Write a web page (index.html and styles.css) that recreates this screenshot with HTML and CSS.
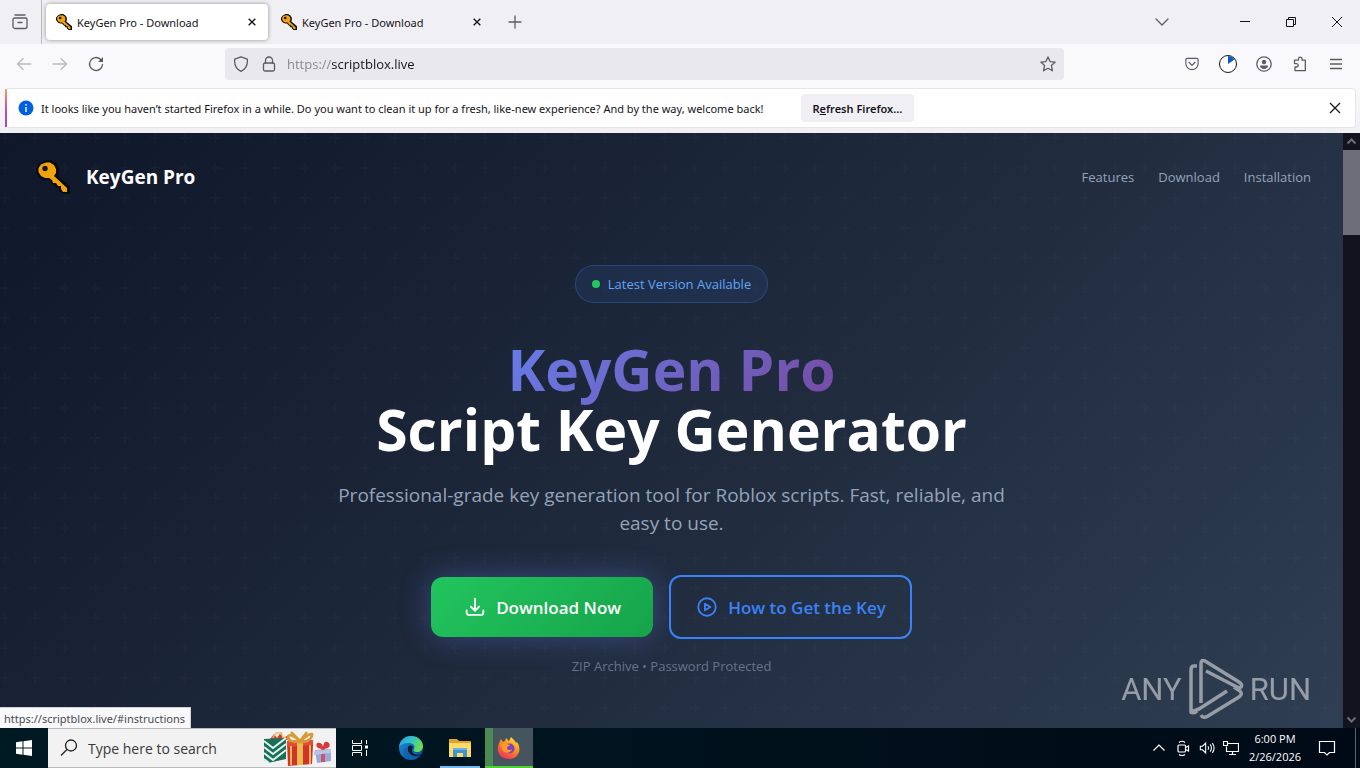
FILE: index.html
```
<!DOCTYPE html>
<html lang="en">
<head>
  <meta charset="UTF-8">
  <meta name="viewport" content="width=device-width, initial-scale=1.0">
  <title>KeyGen Pro - Download</title>
  <link rel="stylesheet" href="styles.css">
</head>
<body>
  <svg class="defs" aria-hidden="true">
    <symbol id="key" viewBox="0 0 34 34">
      <path d="M10 0h5l5 3 3 5v5l-1 3 12 10v8h-7l-4-3v-3h-3l-2-3-3-2-2-3H9l-5-2-4-5V8l4-5z" fill="#0a0a0c"/>
      <path d="M10 2.500h4l4 2.500 2 4v4l-2 3 13 12v4h-4l-2-3v-3h-3l-2-3h-3l-1-3-3-2H9l-4-2-2.500-4V8L5 4.500z" fill="#f0a30a"/>
      <circle cx="9" cy="8.500" r="2.700" fill="#15141a"/>
    </symbol>
    <symbol id="close" viewBox="0 0 12 12">
      <path d="M1 1l10 10M11 1L1 11"/>
    </symbol>
  </svg>

  <!-- tabs -->
  <div class="tabstrip">
    <button class="recent" aria-label="Recent browsing">
      <svg class="icon" viewBox="0 0 16 16"><path d="M3 1h10M2.500 4h11A1.500 1.500 0 0 1 15 5.500v7a2 2 0 0 1-2 2H3a2 2 0 0 1-2-2v-7A1.500 1.500 0 0 1 2.500 4zM6 8.500h4"/></svg>
    </button>
    <div class="tab active">
      <svg class="favicon"><use href="#key"/></svg>
      <span class="tab-title">KeyGen Pro - Download</span>
      <button class="tab-close" aria-label="Close tab"><svg><use href="#close"/></svg></button>
    </div>
    <div class="tab">
      <svg class="favicon"><use href="#key"/></svg>
      <span class="tab-title">KeyGen Pro - Download</span>
      <button class="tab-close" aria-label="Close tab"><svg><use href="#close"/></svg></button>
    </div>
    <button class="new-tab" aria-label="New tab"><svg class="icon" viewBox="0 0 16 16"><path d="M8 2v12M2 8h12"/></svg></button>
    <div class="window-controls">
      <button class="list-tabs" aria-label="List all tabs"><svg class="icon" viewBox="0 0 16 16"><path d="M2 5l6 6 6-6"/></svg></button>
      <button class="win" aria-label="Minimize"><svg viewBox="0 0 10 10"><path d="M0 4.500h10"/></svg></button>
      <button class="win" aria-label="Restore"><svg viewBox="0 0 10 10"><path d="M.5 2.500h7v7h-7zM2.500 2.500v-2h7v7h-2"/></svg></button>
      <button class="win" aria-label="Close"><svg viewBox="0 0 10 10"><path d="M0 0l10 10M10 0L0 10"/></svg></button>
    </div>
  </div>

  <!-- address bar -->
  <div class="toolbar">
    <button class="tool off" aria-label="Back"><svg class="icon" viewBox="0 0 16 16"><path d="M15 8H1.500M7 2.500L1.500 8 7 13.500"/></svg></button>
    <button class="tool off" aria-label="Forward"><svg class="icon" viewBox="0 0 16 16"><path d="M1 8h13.500M9 2.500L14.500 8 9 13.500"/></svg></button>
    <button class="tool" aria-label="Reload"><svg class="icon" viewBox="0 0 16 16"><path d="M14.500 8.500A6.500 6.500 0 1 1 12.500 3.300l1.500 1.500"/><path class="solid" d="M15 1v5h-5z"/></svg></button>
    <div class="urlbar">
      <svg class="icon" viewBox="0 0 16 16"><path d="M8 .8l6.300 2.400c.6 6-1.800 10-6.300 12.200C3.500 13.200 1.100 9.200 1.700 3.200z"/></svg>
      <svg class="icon lock" viewBox="0 0 16 16"><rect x="2.500" y="7" width="11" height="8" rx="1.500"/><path d="M4.500 7V4.500a3.500 3.500 0 0 1 7 0V7"/></svg>
      <input class="url" type="text" aria-label="Address" value="https://scriptblox.live">
      <button class="tool star" aria-label="Bookmark"><svg class="icon" viewBox="0 0 16 16"><path d="M8 .9l2.100 4.700 5.100.5-3.800 3.500 1.100 5.200L8 12.200l-4.500 2.600 1.100-5.200L.8 6.100l5.100-.5z"/></svg></button>
    </div>
    <button class="tool" aria-label="Pocket"><svg class="icon small" viewBox="0 0 16 16"><path d="M2.500 1.500h11A1.500 1.500 0 0 1 15 3v4.500a7 7 0 0 1-14 0V3a1.500 1.500 0 0 1 1.500-1.500zM4.500 6L8 9.500 11.500 6"/></svg></button>
    <button class="tool" aria-label="Session"><svg class="dial" viewBox="0 0 20 20"><circle cx="10" cy="10" r="8.500" fill="#fff" stroke="#15141a"/><path d="M10 2v8l6.500-4.500A8 8 0 0 0 10 2z" fill="#0a5cc0"/></svg></button>
    <button class="tool" aria-label="Account"><svg class="icon" viewBox="0 0 16 16"><circle cx="8" cy="8" r="7.200"/><circle class="solid" cx="8" cy="6" r="2.200"/><path class="solid" d="M4 9.500h8c0 2-1.500 3.500-4 3.500s-4-1.500-4-3.500z"/></svg></button>
    <button class="tool" aria-label="Extensions"><svg class="icon" viewBox="0 0 16 16"><path d="M2.500 5.500V4.200h4V3a1.800 1.800 0 0 1 3.600 0v1.200h3.200v10.500H3V11h1.500a1.700 1.700 0 0 0 0-3.400H2.500z"/></svg></button>
    <button class="tool" aria-label="Menu"><svg class="icon" viewBox="0 0 16 16"><path d="M2.500 3.500h11M2.500 8h11M2.500 12.500h11"/></svg></button>
  </div>

  <!-- notification -->
  <div class="notice-wrap">
    <div class="notice">
      <svg class="info" viewBox="0 0 16 16"><circle cx="8" cy="8" r="7.500" fill="#0060df"/><path d="M8 7v5M8 4v1.500" stroke="#fff" stroke-width="1.400"/></svg>
      <span class="notice-text">It looks like you haven’t started Firefox in a while. Do you want to clean it up for a fresh, like-new experience? And by the way, welcome back!</span>
      <button class="refresh">R<u>e</u>fresh Firefox…</button>
      <button class="notice-close" aria-label="Dismiss"><svg><use href="#close"/></svg></button>
    </div>
  </div>

  <!-- page -->
  <div class="viewport">
    <main class="hero">
      <nav class="navbar">
        <a class="brand" href="#"><svg class="logo"><use href="#key"/></svg>KeyGen Pro</a>
        <div class="links">
          <a href="#features">Features</a>
          <a href="#download">Download</a>
          <a href="#instructions">Installation</a>
        </div>
      </nav>
      <section class="content">
        <div class="badge"><span class="dot"></span>Latest Version Available</div>
        <h1><span class="gradient-text">KeyGen Pro</span><br>Script Key Generator</h1>
        <p class="lead">Professional-grade key generation tool for Roblox scripts. Fast, reliable, and easy to use.</p>
        <div class="actions">
          <a class="btn btn-download" href="#download">
            <svg viewBox="0 0 24 24"><path d="M12 2v14M7 11.500l5 5 5-5M2 16v2.500a3 3 0 0 0 3 3h14a3 3 0 0 0 3-3V16"/></svg>
            Download Now
          </a>
          <a class="btn btn-key" href="#instructions">
            <svg viewBox="0 0 24 24"><circle cx="12" cy="12" r="10.500"/><path d="M9.500 8v8l6.500-4z"/></svg>
            How to Get the Key
          </a>
        </div>
        <p class="hint">ZIP Archive • Password Protected</p>
      </section>
    </main>
    <div class="scrollbar">
      <svg viewBox="0 0 17 17"><path d="M4.500 10.500l4-4 4 4"/></svg>
      <div class="thumb"></div>
      <svg class="down" viewBox="0 0 17 17"><path d="M4.500 6.500l4 4 4-4"/></svg>
    </div>
    <div class="watermark">
      <span>ANY</span>
      <svg viewBox="0 0 56 62">
        <path d="M9 8H6q-3 0-3 4v42l8-3 28-18"/>
        <path d="M3 54q2 2 6-1"/>
        <path d="M13 45V6q0-5 4-3l34 21q4 3 2 5-2 2-6-1L18 13"/>
        <path d="M46 29l6 4q3 3-1 6L20 58q-5 3-7-1"/>
      </svg>
      <span>RUN</span>
    </div>
    <div class="status">https://scriptblox.live/#instructions</div>
  </div>

  <!-- taskbar -->
  <div class="taskbar">
    <button class="start" aria-label="Start"><svg viewBox="0 0 16 16"><path d="M0 2.200L6.500 1.300v6.200H0zM7.500 1.200L16 0v7.500H7.500zM0 8.500h6.500v6.200L0 13.800zM7.500 8.500H16V16l-8.500-1.200z" fill="#fff"/></svg></button>
    <label class="search">
      <svg class="lens" viewBox="0 0 18 18"><circle cx="11" cy="6.500" r="5.500"/><path d="M7 10.500L1 16.500"/></svg>
      <input type="text" aria-label="Search" placeholder="Type here to search">
      <svg class="gifts" viewBox="0 0 68 36">
        <path d="M6 9l4-5 3 4 4-6 3 6 4-3 3 5z" fill="#cf3a2b"/>
        <path d="M9 8q2-6 6-5t4 6" fill="none" stroke="#e5c06a" stroke-width="1.500"/>
        <path d="M0 9l22-1v21L4 33 0 30z" fill="#17715a"/>
        <path d="M0 11l9 7L22 8M0 17l9 7 13-10M0 23l9 7 13-10M0 29l5 4" fill="none" stroke="#e4f3e9" stroke-width="2"/>
        <path d="M23 11l26-1v5l-1 19-24 2z" fill="#cf3329"/>
        <path d="M23 11l26-1v5l-26 2z" fill="#e34a3b"/>
        <path d="M33 11h6v24h-6zM26 16h2v19h-2zM45 15h2v19h-2z" fill="#edb952"/>
        <path d="M36 11Q25 2 24 7t12 5q10 0 12-6t-12 5zM36 11l-9-9M36 11l7-9" fill="none" stroke="#d69b35" stroke-width="2.500"/>
        <path d="M51 20l16-1v12l-14 2z" fill="#98abd8"/>
        <path d="M57 19h4v13h-4z" fill="#cf5566"/>
        <path d="M50 21l17-2v4l-17 2z" fill="#b8c5e7"/>
        <path d="M58 19q-8-1-5-6 5-1 6 4 1-8 6-4 3 5-5 6z" fill="#d93a34"/>
      </svg>
    </label>
    <button class="app" aria-label="Task View"><svg class="taskview" viewBox="0 0 18 18"><path d="M1.500 1v3.500h9V1M1.500 17v-3.500h9V17M1.500 6.500h9v5h-9zM15.500 1v4M15.500 11v6"/><path d="M14 6.500h3v3h-3z" fill="#fff" stroke="none"/></svg></button>
    <div class="pinned">
      <button class="app" aria-label="Edge">
        <svg class="big" viewBox="0 0 24 24">
          <defs>
            <linearGradient id="edge-top" x1="0" y1="0" x2="1" y2=".4"><stop offset="0" stop-color="#1d9ee2"/><stop offset=".5" stop-color="#30c1cb"/><stop offset="1" stop-color="#68dc55"/></linearGradient>
            <linearGradient id="edge-low" x1="0" y1="0" x2="1" y2="1"><stop offset="0" stop-color="#1b8fdc"/><stop offset="1" stop-color="#0c4893"/></linearGradient>
          </defs>
          <circle cx="12" cy="12" r="12" fill="url(#edge-low)"/>
          <path d="M0 11C1 4 6 0 12 0c7 0 12 5 12 10 0 4-3 6-6 6-3 0-4-1-3-3 2-4-2-6-5-6C5 7 1 9 0 11z" fill="url(#edge-top)"/>
          <path d="M9 11c-1 6 4 11 13 8l1-1c-3 1-10 2-10-4 0-2 1-2 1-3-1-2-4-2-5 0z" fill="#04192b"/>
          <path d="M9 11c-2 5 2 12 10 10-4 4-12 3-14-3-1-5 2-7 4-7z" fill="#1161af"/>
        </svg>
      </button>
      <button class="app running" aria-label="File Explorer">
        <svg class="big" viewBox="0 0 24 24">
          <path d="M1 3h8l2 2h12v15H1z" fill="#e3a227"/>
          <path d="M1 7h22v14H1z" fill="#ffda69"/>
          <path d="M5 13h14v8h-4v-4H9v4H5z" fill="#3f93cf"/>
          <path d="M5 12h14v2H5z" fill="#67b5e8"/>
        </svg>
      </button>
      <button class="app current" aria-label="Firefox">
        <svg class="big" viewBox="0 0 24 24">
          <defs><linearGradient id="fox" x1=".8" y1="0" x2=".2" y2="1"><stop offset="0" stop-color="#ffe63b"/><stop offset=".45" stop-color="#ff8a20"/><stop offset="1" stop-color="#f1275f"/></linearGradient></defs>
          <path d="M3 5l1-2 2 3 2-1 1-3 3 3 2-4 4 4 1 2 1-1c3 4 3 9 1 12-2 4-6 5-9 5C5 23 0 18 1 12c0-3 1-5 2-7z" fill="url(#fox)"/>
          <circle cx="12.500" cy="12.500" r="5" fill="#7b3fc9"/>
          <path d="M4 8c3-2 6 0 9 1-1 2-3 1-3 3 0 2 3 3 5 1-1 5-8 5-10 0z" fill="#ff9a27"/>
        </svg>
      </button>
    </div>
    <div class="tray">
      <svg viewBox="0 0 16 16"><path d="M2.500 10.500L8 5l5.500 5.500"/></svg>
      <svg viewBox="0 0 16 16"><rect x="3" y="5" width="7.500" height="7" rx="1"/><path d="M10.500 7.500l3-1.500v5l-3-1.500M4 2.500Q7 0 10 2.500M4 14.500q3 2 6 0"/></svg>
      <svg viewBox="0 0 18 16"><path d="M1.500 6h2.500l3.500-3.500v11L4 10H1.500zM10 6q1.500 2 0 4M12.500 4q3 4 0 8M15 2.500q4 5.500 0 11"/></svg>
      <svg viewBox="0 0 16 16"><path d="M5 3.500h10.500v8H3.500V6.500M9.500 11.500v3M6 14.500h7M.5 1.500h4v4h-4z"/></svg>
      <div class="clock"><span>6:00 PM</span><span>2/26/2026</span></div>
      <svg class="action" viewBox="0 0 18 18"><path d="M1.500 2.500h15v11h-5L9 16l-2.500-2.500h-5z"/></svg>
    </div>
  </div>
</body>
</html>
```
FILE: styles.css
```
* {
  box-sizing: border-box;
}
body {
  margin: 0;
  height: 100vh;
  display: flex;
  flex-direction: column;
  overflow: hidden;
  font-family: "Noto Sans", "Open Sans", sans-serif;
  font-size: 11px;
  color: #15141a;
}
button {
  display: flex;
  align-items: center;
  justify-content: center;
  padding: 0;
  border: none;
  background: none;
  font: inherit;
  color: inherit;
}
input {
  min-width: 0;
  padding: 0;
  border: none;
  outline: none;
  background: none;
  font: inherit;
}
a {
  color: inherit;
  text-decoration: none;
}
svg {
  flex: none;
}
.defs {
  position: absolute;
  width: 0;
  height: 0;
}
.icon {
  width: 16px;
  height: 16px;
  fill: none;
  stroke: #5b5b66;
  stroke-width: 1.3;
  stroke-linecap: round;
  stroke-linejoin: round;
}
.icon.small {
  width: 14px;
  height: 14px;
}
.icon .solid {
  fill: #5b5b66;
  stroke: none;
}

/* tab strip */
.tabstrip {
  display: flex;
  align-items: center;
  height: 44px;
  background: #f0f0f4;
}
.recent {
  width: 42px;
  height: 44px;
  padding-right: 1px;
  border-right: 1px solid #b8b8bf;
}
.tab {
  display: flex;
  align-items: center;
  width: 222px;
  height: 36px;
  margin-left: 4px;
  padding: 0 8px 0 10px;
  border-radius: 4px;
}
.tab + .tab {
  margin-left: 3px;
}
.tab.active {
  background: #fff;
  box-shadow: 0 0 4px rgba(0, 0, 0, 0.4);
}
.favicon {
  width: 16px;
  height: 16px;
  margin-right: 5px;
}
.tab-title {
  flex: 1;
  white-space: nowrap;
}
.tab-close {
  width: 16px;
  height: 16px;
}
.tab-close svg {
  width: 8px;
  height: 8px;
  stroke: #15141a;
  stroke-width: 2;
}
.new-tab {
  width: 32px;
  height: 32px;
  margin-left: 6px;
}
.window-controls {
  display: flex;
  align-items: center;
  margin-left: auto;
}
.list-tabs {
  width: 32px;
  height: 44px;
  margin-right: 44px;
}
.win {
  width: 46px;
  height: 44px;
}
.win svg {
  width: 10px;
  height: 10px;
  fill: none;
  stroke: #15141a;
}

/* toolbar */
.toolbar {
  display: flex;
  align-items: center;
  gap: 4px;
  height: 44px;
  padding: 0 8px 4px;
  background: #f9f9fb;
}
.tool {
  width: 32px;
  height: 32px;
}
.off {
  opacity: 0.4;
}
.dial {
  width: 20px;
  height: 20px;
}
.urlbar {
  flex: 1;
  display: flex;
  align-items: center;
  height: 32px;
  margin: 0 108px 0 109px;
  padding-left: 8px;
  background: #e9e9ed;
  border-radius: 4px;
}
.lock {
  margin: 0 10px 0 12px;
}
.url {
  flex: 1;
  height: 24px;
  font-family: "Open Sans", sans-serif;
  font-size: 13px;
  background: linear-gradient(to right, #85858c 44px, #15141a 44px);
  -webkit-background-clip: text;
  background-clip: text;
  color: transparent;
}

/* notification bar */
.notice-wrap {
  height: 45px;
  padding: 0 4px 5px 5px;
  background: linear-gradient(#f9f9fb, #f0f0f4);
}
.notice {
  position: relative;
  display: flex;
  align-items: center;
  height: 40px;
  padding: 0 12px 0 13px;
  border: 1px solid #e6e6ea;
  border-left: none;
  border-radius: 4px;
  background: #fff;
}
.notice::before {
  content: "";
  position: absolute;
  left: 0;
  top: 0;
  bottom: 0;
  width: 2px;
  background: linear-gradient(#f5a05a, #d64c9b, #8a4fd0);
}
.info {
  width: 16px;
  height: 16px;
  margin-right: 7px;
}
.notice-text {
  white-space: nowrap;
}
.refresh {
  height: 28px;
  margin-left: 37px;
  padding: 0 12px;
  border-radius: 4px;
  background: #f0f0f4;
  font-weight: 600;
}
.notice-close {
  width: 16px;
  height: 16px;
  margin-left: auto;
}
.notice-close svg {
  width: 12px;
  height: 12px;
  stroke: #15141a;
  stroke-width: 1.2;
}

/* page */
.viewport {
  position: relative;
  flex: 1;
  display: flex;
  min-height: 0;
  font-family: "Open Sans", "Noto Sans", sans-serif;
}
.hero {
  flex: 1;
  background:
    url("data:image/svg+xml,%3Csvg xmlns='http://www.w3.org/2000/svg' width='30' height='30'%3E%3Cpath d='M6 4V0H4v4H0v2h4v4h2V6h4V4z' fill='%23fff' fill-opacity='.014'/%3E%3C/svg%3E"),
    linear-gradient(135deg, #0f172a 0%, #1e293b 50%, #2f3e52 100%);
  color: #fff;
}
.navbar {
  display: flex;
  align-items: center;
  justify-content: space-between;
  padding: 24px 32px;
}
.brand {
  display: flex;
  align-items: center;
  gap: 16px;
  height: 40px;
  padding-left: 4px;
  font-size: 19px;
  font-weight: 700;
}
.logo {
  width: 34px;
  height: 34px;
}
.links {
  display: flex;
  gap: 24px;
  font-size: 13px;
  color: #94a3b8;
}
.content {
  display: flex;
  flex-direction: column;
  align-items: center;
  padding-top: 44px;
  text-align: center;
}
.badge {
  display: flex;
  align-items: center;
  gap: 8px;
  height: 38px;
  padding: 0 16px;
  border: 1px solid rgba(59, 130, 246, 0.3);
  border-radius: 19px;
  background: rgba(59, 130, 246, 0.1);
  font-size: 13px;
  color: #60a5fa;
}
.dot {
  width: 8px;
  height: 8px;
  border-radius: 50%;
  background: #22c55e;
}
h1 {
  margin: 36px 0 22px;
  font-size: 57px;
  line-height: 60px;
  font-weight: 700;
}
.gradient-text {
  background: linear-gradient(135deg, #667eea, #764ba2);
  -webkit-background-clip: text;
  background-clip: text;
  color: transparent;
}
.lead {
  max-width: 672px;
  margin: 0 0 38px;
  font-size: 19px;
  line-height: 28px;
  color: #94a3b8;
}
.actions {
  display: flex;
  align-items: center;
  gap: 16px;
}
.btn {
  display: flex;
  align-items: center;
  gap: 11px;
  height: 60px;
  padding: 0 32px 0 34px;
  border-radius: 12px;
  font-size: 17px;
  font-weight: 600;
}
.btn svg {
  width: 20px;
  height: 20px;
  fill: none;
  stroke: currentColor;
  stroke-width: 2.2;
  stroke-linecap: round;
  stroke-linejoin: round;
}
.btn-download {
  background: linear-gradient(135deg, #22c55e, #16a34a);
  box-shadow: 0 0 30px rgba(102, 126, 234, 0.4);
}
.btn-key {
  height: 64px;
  padding: 0 24px 0 26px;
  border: 2px solid #3b82f6;
  color: #3b82f6;
}
.hint {
  margin: 17px 0 0;
  font-size: 13px;
  line-height: 20px;
  color: #64748b;
}
.scrollbar {
  display: flex;
  flex-direction: column;
  width: 17px;
  background: #12131f;
}
.scrollbar svg {
  width: 17px;
  height: 17px;
  fill: none;
  stroke: #6b6c77;
  stroke-width: 2;
}
.thumb {
  height: 85px;
  background: #6d6e79;
}
.scrollbar .down {
  margin-top: auto;
}
.watermark {
  position: absolute;
  right: 49px;
  bottom: 8px;
  display: flex;
  align-items: center;
  gap: 6px;
  font-family: "Roboto", sans-serif;
  font-size: 31px;
  color: #fff;
  opacity: 0.5;
}
.watermark svg {
  width: 56px;
  height: 62px;
  fill: none;
  stroke: #fff;
  stroke-width: 3.5;
  stroke-linejoin: round;
}
.status {
  position: absolute;
  left: 0;
  bottom: 0;
  height: 21px;
  padding: 0 5px 0 4px;
  background: #f9f9fb;
  border: 1px solid #d0d0d6;
  border-width: 1px 1px 0 0;
  font-family: "Noto Sans", sans-serif;
  line-height: 21px;
  color: #4a4a52;
}

/* taskbar */
.taskbar {
  display: flex;
  height: 40px;
  background: linear-gradient(to right, #001a23, #00121d 50%, #000a17);
  font-family: "Open Sans", "Noto Sans", sans-serif;
  color: #fff;
}
.start {
  width: 48px;
}
.start svg {
  width: 16px;
  height: 16px;
}
.search {
  display: flex;
  align-items: center;
  width: 288px;
  padding: 0 4px 0 12px;
  background: #f2f2f2;
  border: 1px solid #b9bcbf;
  border-width: 1px 0;
}
.search input {
  flex: 1;
  font-size: 14px;
  color: #2b2b2b;
}
.search input::placeholder {
  color: #3a3a3a;
}
.lens {
  width: 18px;
  height: 18px;
  margin-right: 10px;
  fill: none;
  stroke: #222;
  stroke-width: 1.3;
}
.gifts {
  width: 68px;
  height: 36px;
}
.app {
  width: 48px;
}
.app .big {
  width: 24px;
  height: 24px;
}
.pinned {
  display: flex;
  gap: 1px;
  margin-left: 3px;
}
.taskview {
  width: 18px;
  height: 18px;
  fill: none;
  stroke: #fff;
}
.running {
  background: linear-gradient(#76b9ed, #76b9ed) center bottom / 40px 2px no-repeat;
}
.current {
  background:
    linear-gradient(#4cd137, #4cd137) center bottom / 100% 2px no-repeat,
    linear-gradient(to right, #4b8a52 8px, #46545f 8px);
}
.tray {
  display: flex;
  align-items: center;
  gap: 8px;
  margin: 0 4px 0 auto;
  padding-right: 19px;
  border-right: 1px solid #59616b;
}
.tray svg {
  width: 16px;
  height: 16px;
  fill: none;
  stroke: #fff;
  stroke-width: 1.2;
}
.clock {
  display: flex;
  flex-direction: column;
  width: 56px;
  margin-right: 7px;
  align-items: center;
  font-size: 11px;
  line-height: 18px;
  white-space: nowrap;
}
.tray .action {
  width: 18px;
  height: 18px;
}
```
